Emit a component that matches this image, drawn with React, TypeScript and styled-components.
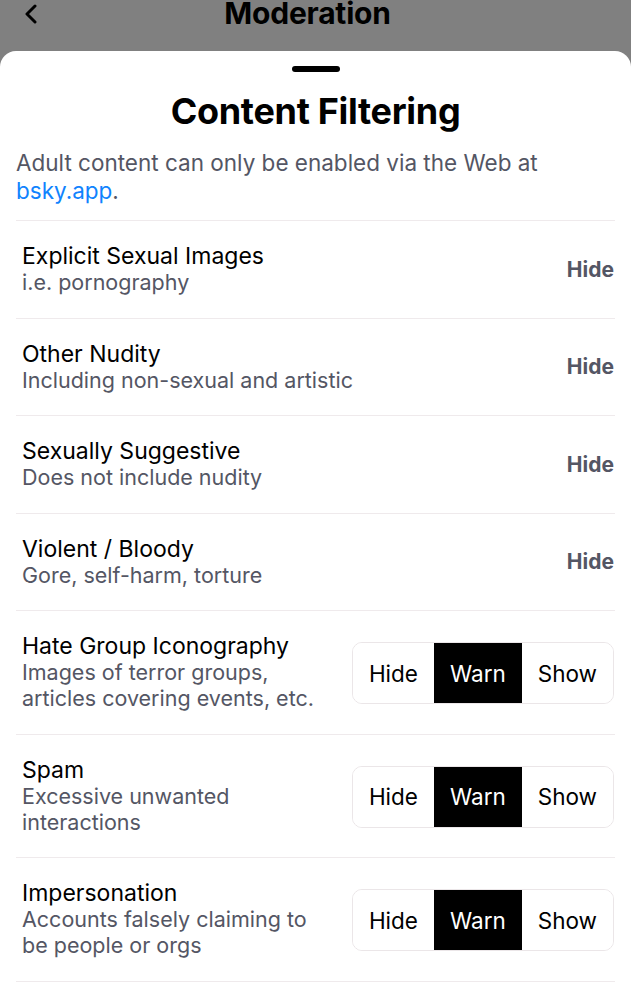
import * as React from 'react';
import styled, { createGlobalStyle } from 'styled-components';

const GlobalStyle = createGlobalStyle`
  html, body {
    margin: 0;
    padding: 0;
    background: #808080;
  }
  body {
    font-family: Inter, "Noto Sans", "Liberation Sans", sans-serif;
    -webkit-font-smoothing: antialiased;
  }
`;

const Page = styled.div`
  width: 631px;
  height: 1000px;
  overflow: hidden;
  background: #808080;
  display: flex;
  flex-direction: column;
`;

const Header = styled.div`
  height: 51px;
  flex-shrink: 0;
  display: grid;
  grid-template-columns: 64px 1fr 80px;
  align-items: start;
`;

const BackButton = styled.div`
  display: flex;
  justify-content: center;
  padding-top: 4px;
  padding-right: 2px;
`;

const HeaderTitle = styled.div`
  margin-top: -4px;
  text-align: center;
  font-size: 30px;
  line-height: 34px;
  font-weight: 700;
  color: #000;
  letter-spacing: -0.2px;
`;

const Sheet = styled.div`
  flex: 1;
  background: #fff;
  border-radius: 16px 16px 0 0;
  padding: 15px 16px 0;
  display: flex;
  flex-direction: column;
`;

const Handle = styled.div`
  width: 48px;
  height: 6px;
  border-radius: 3px;
  background: #000;
  align-self: center;
`;

const Title = styled.h1`
  margin: 17px 0 0;
  text-align: center;
  font-size: 36px;
  line-height: 44px;
  font-weight: 700;
  color: #000;
  letter-spacing: -0.3px;
`;

const Notice = styled.p`
  margin: 16px 0 0;
  font-size: 22.5px;
  line-height: 28px;
  color: #545664;
  padding-bottom: 15px;
  border-bottom: 1px solid #efeaec;
`;

const WebLink = styled.span`
  color: #1083fe;
`;

const Row = styled.div`
  display: flex;
  align-items: center;
  justify-content: space-between;
  gap: 12px;
  padding: 22.25px 1px 22.25px 6px;
  border-bottom: 1px solid #efeaec;
`;

const RowText = styled.div`
  display: flex;
  flex-direction: column;
  min-width: 0;
`;

const RowTitle = styled.div`
  font-size: 23px;
  line-height: 26px;
  color: #000;
`;

const RowSub = styled.div`
  font-size: 21.5px;
  line-height: 26px;
  color: #545664;
`;

const FixedValue = styled.div`
  font-size: 21px;
  font-weight: 700;
  color: #545664;
`;

const Segmented = styled.div`
  display: flex;
  height: 60px;
  margin-top: 2px;
  border: 1px solid #ebe6e8;
  border-radius: 10px;
  overflow: hidden;
  flex-shrink: 0;
`;

const Segment = styled.div<{ $active?: boolean }>`
  display: flex;
  align-items: center;
  justify-content: center;
  padding: 0 16px;
  font-size: 22.5px;
  color: ${p => (p.$active ? '#fff' : '#000')};
  background: ${p => (p.$active ? '#000' : '#fff')};
`;

type Item = {
  title: string;
  sub: string[];
  fixed?: string;
};

const items: Item[] = [
  { title: 'Explicit Sexual Images', sub: ['i.e. pornography'], fixed: 'Hide' },
  { title: 'Other Nudity', sub: ['Including non-sexual and artistic'], fixed: 'Hide' },
  { title: 'Sexually Suggestive', sub: ['Does not include nudity'], fixed: 'Hide' },
  { title: 'Violent / Bloody', sub: ['Gore, self-harm, torture'], fixed: 'Hide' },
  { title: 'Hate Group Iconography', sub: ['Images of terror groups,', 'articles covering events, etc.'] },
  { title: 'Spam', sub: ['Excessive unwanted', 'interactions'] },
  { title: 'Impersonation', sub: ['Accounts falsely claiming to', 'be people or orgs'] },
];

const options = ['Hide', 'Warn', 'Show'];

const FilterRow = ({ item }: { item: Item }) => (
  <Row>
    <RowText>
      <RowTitle>{item.title}</RowTitle>
      {item.sub.map(line => (
        <RowSub key={line}>{line}</RowSub>
      ))}
    </RowText>
    {item.fixed ? (
      <FixedValue>{item.fixed}</FixedValue>
    ) : (
      <Segmented>
        {options.map(o => (
          <Segment key={o} $active={o === 'Warn'}>
            {o}
          </Segment>
        ))}
      </Segmented>
    )}
  </Row>
);

export default function App() {
  return (
    <Page>
      <GlobalStyle />
      <Header>
        <BackButton>
          <svg width="14" height="20" viewBox="0 0 14 20">
            <path d="M11 2 L3 10 L11 18" fill="none" stroke="#000" strokeWidth="3" strokeLinecap="round" strokeLinejoin="round" />
          </svg>
        </BackButton>
        <HeaderTitle>Moderation</HeaderTitle>
        <div />
      </Header>
      <Sheet>
        <Handle />
        <Title>Content Filtering</Title>
        <Notice>
          Adult content can only be enabled via the Web at <WebLink>bsky.app</WebLink>.
        </Notice>
        {items.map(item => (
          <FilterRow key={item.title} item={item} />
        ))}
      </Sheet>
    </Page>
  );
}
